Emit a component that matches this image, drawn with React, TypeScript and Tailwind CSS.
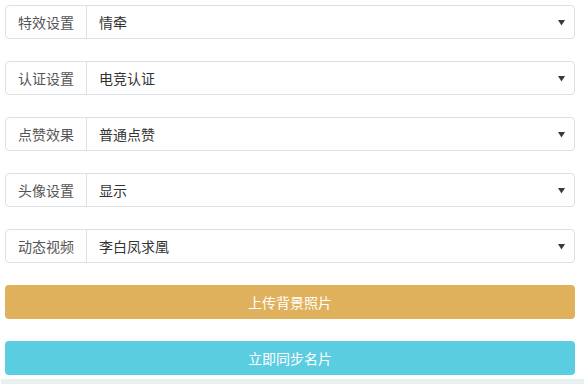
import React from 'react'

const rows = [
  { label: '特效设置', value: '情牵' },
  { label: '认证设置', value: '电竞认证' },
  { label: '点赞效果', value: '普通点赞' },
  { label: '头像设置', value: '显示' },
  { label: '动态视频', value: '李白凤求凰' },
]

function SelectRow({ label, value }: { label: string; value: string }) {
  return (
    <div className="flex h-[34px] w-full rounded border border-[#dcdfe6] bg-white">
      <div className="flex w-[81px] shrink-0 items-center justify-center border-r border-[#dcdfe6] text-[14px] text-[#555]">
        {label}
      </div>
      <div className="flex flex-1 items-center pl-[12px] pr-[9px] text-[14px] text-[#333]">
        <span className="flex-1">{value}</span>
        <svg width="7" height="6" viewBox="0 0 7 6" className="mt-[2px]">
          <path d="M0 0 H7 L3.5 5.5 Z" fill="#3a3a3a" />
        </svg>
      </div>
    </div>
  )
}

export default function App() {
  return (
    <div
      className="flex h-[384px] w-[584px] flex-col bg-white"
      style={{ fontFamily: '"Noto Sans CJK SC", "Noto Sans", sans-serif' }}
    >
      <div className="flex flex-col gap-[22px] px-[5px] pr-[9px] pt-[5px]">
        {rows.map((r) => (
          <SelectRow key={r.label} label={r.label} value={r.value} />
        ))}
        <button className="h-[34px] w-full rounded bg-[#dfb15c] text-[14px] text-white">
          上传背景照片
        </button>
        <button className="h-[34px] w-full rounded bg-[#5bcde0] text-[14px] text-white">
          立即同步名片
        </button>
      </div>
      <div className="ml-[1px] mt-[4px] flex-1 bg-[#e8f1f0]" />
    </div>
  )
}
